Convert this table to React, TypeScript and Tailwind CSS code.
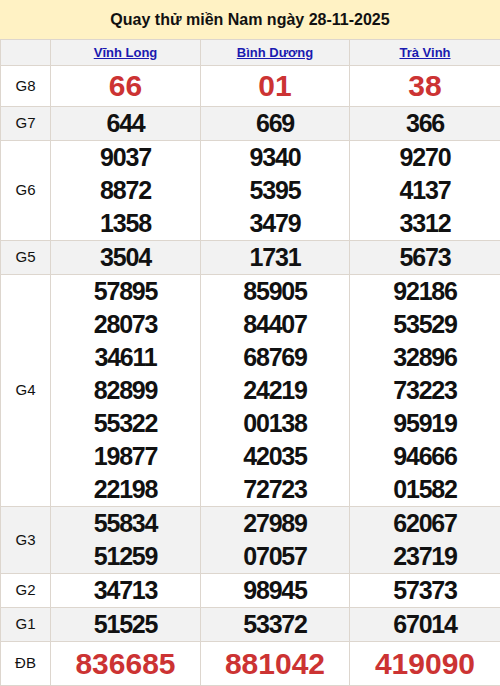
const PROVINCES = ["Vĩnh Long", "Bình Dương", "Trà Vinh"];

type Row = { label: string; cols: string[][]; big?: boolean; alt?: boolean };

const ROWS: Row[] = [
  { label: "G8", cols: [["66"], ["01"], ["38"]], big: true },
  { label: "G7", cols: [["644"], ["669"], ["366"]], alt: true },
  {
    label: "G6",
    cols: [
      ["9037", "8872", "1358"],
      ["9340", "5395", "3479"],
      ["9270", "4137", "3312"],
    ],
  },
  { label: "G5", cols: [["3504"], ["1731"], ["5673"]], alt: true },
  {
    label: "G4",
    cols: [
      ["57895", "28073", "34611", "82899", "55322", "19877", "22198"],
      ["85905", "84407", "68769", "24219", "00138", "42035", "72723"],
      ["92186", "53529", "32896", "73223", "95919", "94666", "01582"],
    ],
  },
  {
    label: "G3",
    cols: [
      ["55834", "51259"],
      ["27989", "07057"],
      ["62067", "23719"],
    ],
    alt: true,
  },
  { label: "G2", cols: [["34713"], ["98945"], ["57373"]] },
  { label: "G1", cols: [["51525"], ["53372"], ["67014"]], alt: true },
  { label: "ĐB", cols: [["836685"], ["881042"], ["419090"]], big: true },
];

export default function App() {
  return (
    <div className="w-[500px] bg-white font-['Liberation_Sans',Arial,sans-serif] text-[#111]">
      <div className="h-[39px] bg-[#fff2c4] flex items-center justify-center text-[16px] font-bold">
        Quay thử miền Nam ngày 28-11-2025
      </div>
      <table className="w-[500px] table-fixed border-collapse">
        <colgroup>
          <col className="w-[50px]" />
          <col className="w-[150px]" />
          <col className="w-[149px]" />
          <col className="w-[151px]" />
        </colgroup>
        <thead>
          <tr className="bg-[#f2f2f2] h-[26px]">
            <th className="border border-[#ddd6ce]"></th>
            {PROVINCES.map((p) => (
              <th key={p} className="border border-[#ddd6ce] text-[13px] font-bold p-0">
                <a href="#" className="text-[#1a1ab0] underline">{p}</a>
              </th>
            ))}
          </tr>
        </thead>
        <tbody>
          {ROWS.map((r) => (
            <tr key={r.label} className={r.alt ? "bg-[#f2f2f2]" : "bg-white"}>
              <td className="border border-[#ddd6ce] text-center text-[15px] p-0">{r.label}</td>
              {r.cols.map((nums, i) => (
                <td key={i} className="border border-[#ddd6ce] text-center p-0">
                  {nums.map((n) =>
                    r.big ? (
                      <div key={n} className={`font-bold text-[30px] text-[#cc3333] ${r.label === "G8" ? "leading-[40px]" : "leading-[43px]"}`}>
                        {n}
                      </div>
                    ) : (
                      <div key={n} className="font-bold text-[25px] leading-[33px] tracking-[-1.2px]">
                        {n}
                      </div>
                    )
                  )}
                </td>
              ))}
            </tr>
          ))}
        </tbody>
      </table>
    </div>
  );
}
